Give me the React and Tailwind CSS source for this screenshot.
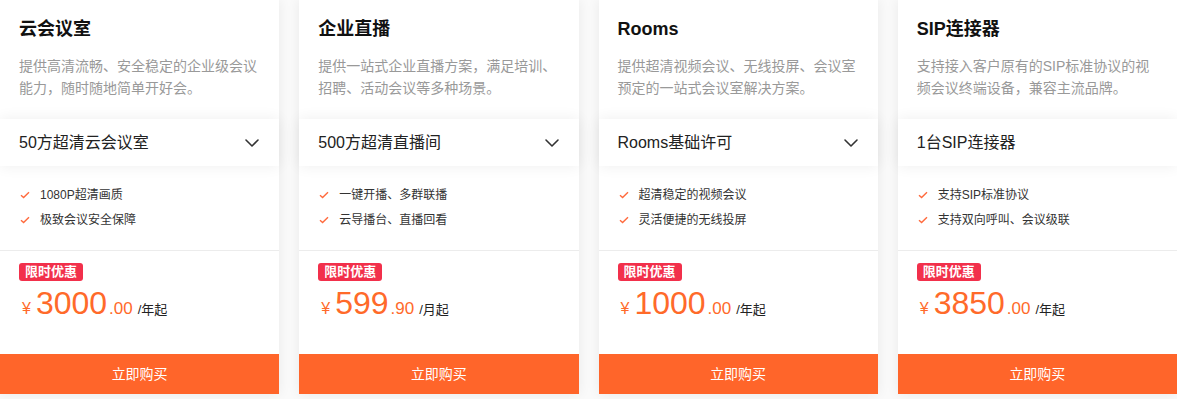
import React from 'react';
import { ChevronDown } from 'lucide-react';

const plans = [
    {
        title: '云会议室',
        desc: '提供高清流畅、安全稳定的企业级会议能力，随时随地简单开好会。',
        option: '50方超清云会议室',
        dropdown: true,
        features: ['1080P超清画质', '极致会议安全保障'],
        price: '3000',
        cents: '.00',
        unit: '/年起',
    },
    {
        title: '企业直播',
        desc: '提供一站式企业直播方案，满足培训、招聘、活动会议等多种场景。',
        option: '500方超清直播间',
        dropdown: true,
        features: ['一键开播、多群联播', '云导播台、直播回看'],
        price: '599',
        cents: '.90',
        unit: '/月起',
    },
    {
        title: 'Rooms',
        desc: '提供超清视频会议、无线投屏、会议室预定的一站式会议室解决方案。',
        option: 'Rooms基础许可',
        dropdown: true,
        features: ['超清稳定的视频会议', '灵活便捷的无线投屏'],
        price: '1000',
        cents: '.00',
        unit: '/年起',
    },
    {
        title: 'SIP连接器',
        desc: '支持接入客户原有的SIP标准协议的视频会议终端设备，兼容主流品牌。',
        option: '1台SIP连接器',
        dropdown: false,
        features: ['支持SIP标准协议', '支持双向呼叫、会议级联'],
        price: '3850',
        cents: '.00',
        unit: '/年起',
    },
];

const Check = () => (
    <svg width="10" height="8" viewBox="0 0 10 8" fill="none" className="shrink-0">
        <path d="M1 4.2 3.6 6.6 9 1.2" stroke="#ff6a3d" strokeWidth="1.4" />
    </svg>
);

const PlanCard = ({ plan }) => (
    <div className="bg-white flex flex-col shadow-[0_0_12px_rgba(0,0,0,0.07)]">
        {/* header */}
        <div className="h-[119px] px-[19px] pt-[17px]">
            <h3 className="text-[18px] leading-[24px] font-bold text-[#111]">{plan.title}</h3>
            <p className="mt-[14px] w-[245px] text-[14px] leading-[22px] text-[#999]">{plan.desc}</p>
        </div>

        {/* selector */}
        <div className="relative z-10 h-[47px] bg-white flex items-center justify-between pl-[19px] pr-[15px] shadow-[0_0_14px_rgba(0,0,0,0.07)]">
            <span className="text-[16px] text-[#222]">{plan.option}</span>
            {plan.dropdown && <ChevronDown size={24} strokeWidth={1.6} className="text-[#333]" />}
        </div>

        {/* features */}
        <div className="h-[85px] pt-[16px] px-[20px] border-b border-[#ececec]">
            {plan.features.map((f) => (
                <div key={f} className="h-[25px] flex items-center gap-[10px] text-[12px] text-[#333]">
                    <Check />
                    <span>{f}</span>
                </div>
            ))}
        </div>

        {/* price */}
        <div className="h-[103px] px-[19px] pt-[12px]">
            <span className="block w-fit h-[18px] px-[6px] rounded-[3px] bg-[#f2304b] text-white text-[13px] leading-[18px] font-bold">
                限时优惠
            </span>
            <div className="mt-[4px] flex items-baseline text-[#ff6a2a] leading-[36px]">
                <span className="text-[16px] ml-[3px] mr-[5px]">¥</span>
                <span className="text-[32px]">{plan.price}</span>
                <span className="text-[17px] ml-[2px]">{plan.cents}</span>
                <span className="text-[13px] text-[#222] ml-[5px]">{plan.unit}</span>
            </div>
        </div>

        {/* buy */}
        <button className="h-[40px] bg-[#ff652a] text-white text-[14px]">立即购买</button>
    </div>
);

const App = () => {
    return (
        <div
            className="w-[1177px] h-[399px] bg-[#fafafa] overflow-hidden"
            style={{ fontFamily: '"Liberation Sans", "Noto Sans CJK SC", sans-serif' }}
        >
            <div className="grid grid-cols-4 gap-[20px]">
                {plans.map((p) => (
                    <PlanCard key={p.title} plan={p} />
                ))}
            </div>
        </div>
    );
};

export default App;
